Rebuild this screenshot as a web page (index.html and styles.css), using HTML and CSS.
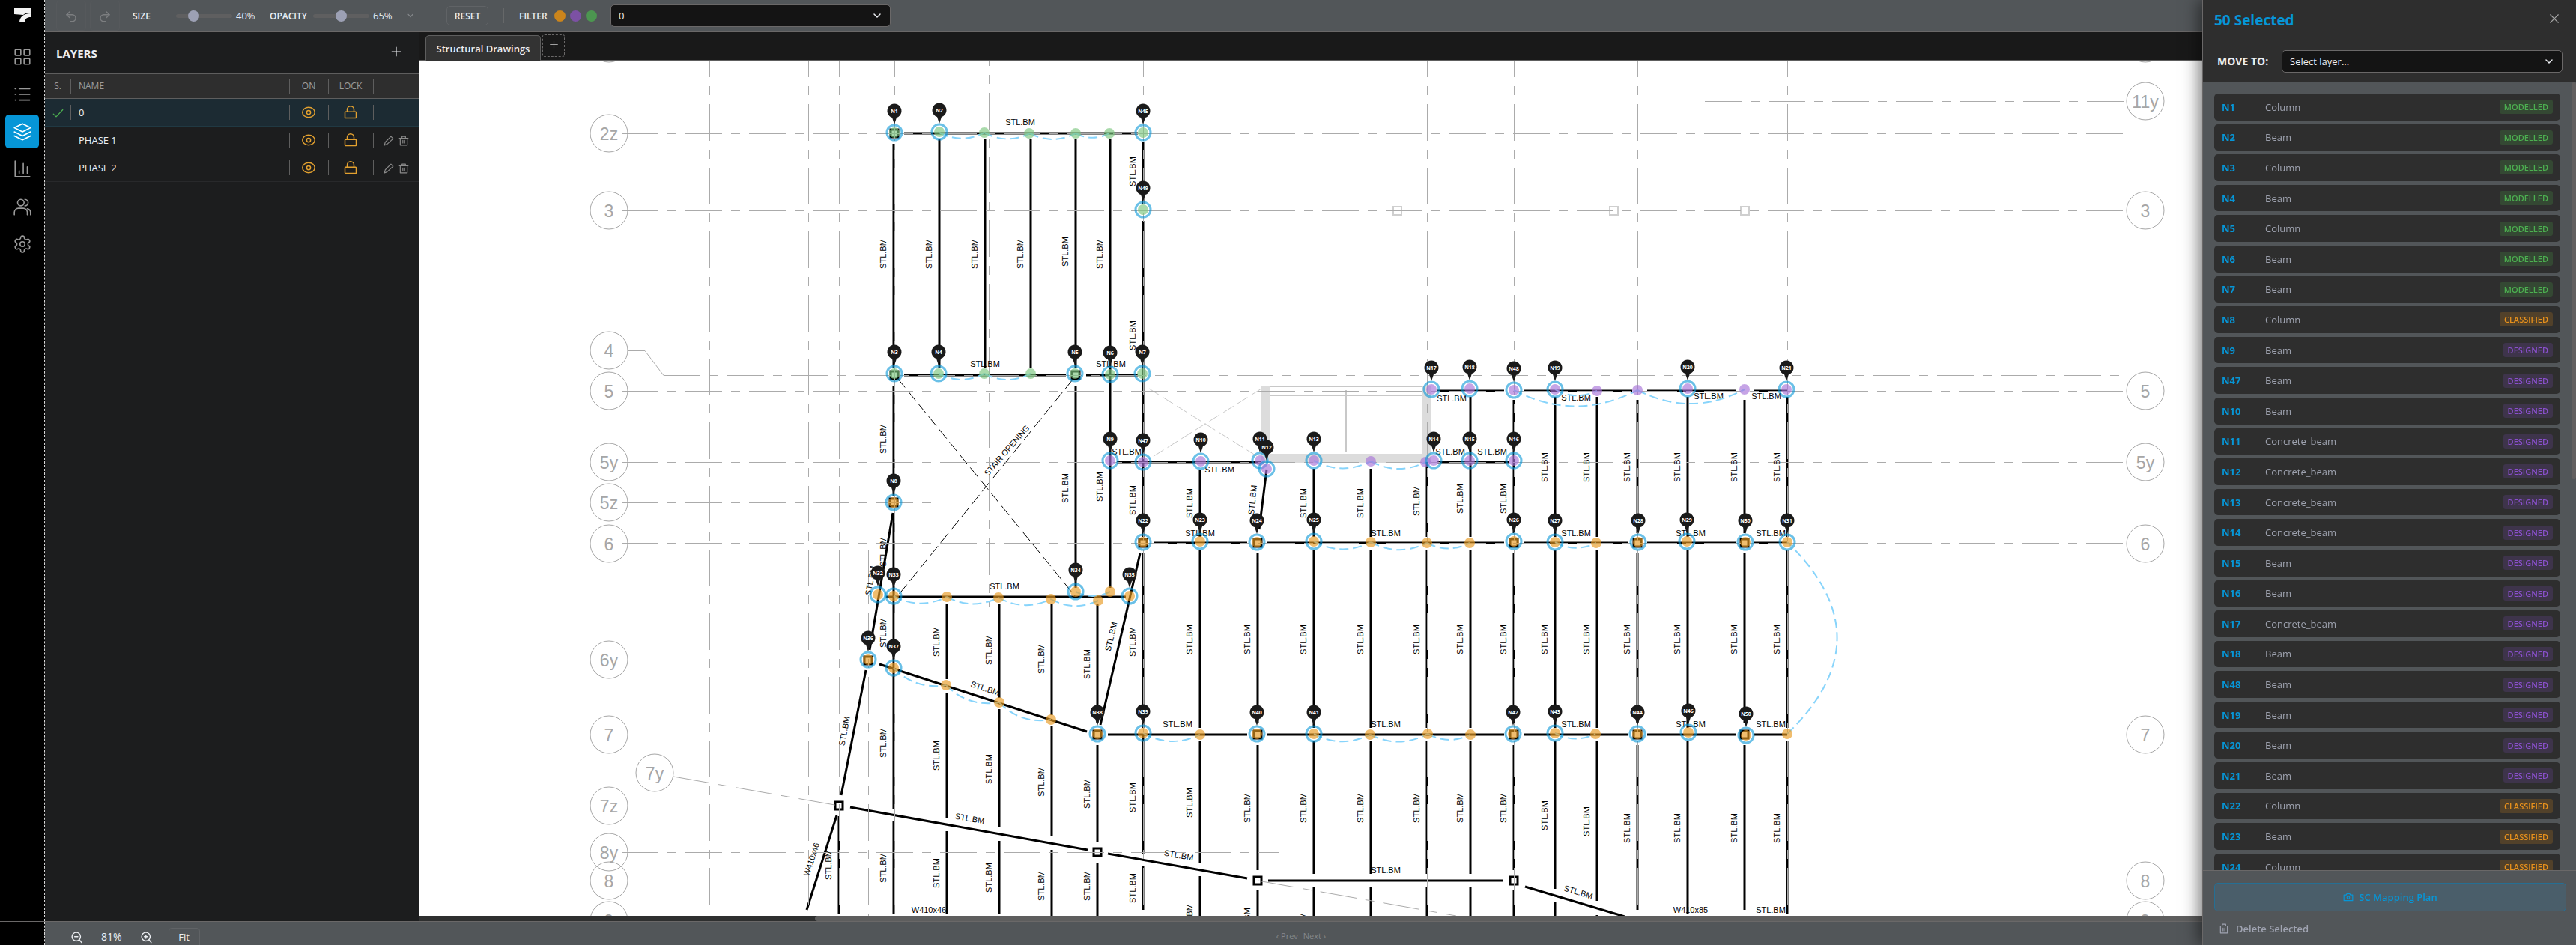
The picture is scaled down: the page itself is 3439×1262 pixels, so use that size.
FILE: index.html
```html
<!DOCTYPE html>
<html lang="en">
<head>
    <meta charset="UTF-8">
    <meta name="viewport" content="width=device-width, initial-scale=1.0">
    <title>Structural Drawings</title>
    <link rel="stylesheet" href="styles.css">
</head>
<body>
    <div class="app">
        <nav class="rail">
            <svg class="logo" viewBox="0 0 22 20"><path d="M0 1h22v6c-5 0-8 1-10 3L0 9z"/><path d="M22 8v5c-5 0-8 2-8 7H7c0-7 5-12 15-12z"/></svg>
            <button class="rail-btn" aria-label="Dashboard"><svg viewBox="0 0 24 24"><rect x="3" y="3" width="7" height="7" rx="1"/><rect x="14" y="3" width="7" height="7" rx="1"/><rect x="3" y="14" width="7" height="7" rx="1"/><rect x="14" y="14" width="7" height="7" rx="1"/></svg></button>
            <button class="rail-btn" aria-label="List"><svg viewBox="0 0 24 24"><path d="M8 5h13M8 12h13M8 19h13M3 5h1M3 12h1M3 19h1"/></svg></button>
            <button class="rail-btn active" aria-label="Layers"><svg viewBox="0 0 24 24"><path d="M12 2 22 7 12 12 2 7zM2 12l10 5 10-5M2 17l10 5 10-5"/></svg></button>
            <button class="rail-btn" aria-label="Reports"><svg viewBox="0 0 24 24"><path d="M3 2v19h18M8 17v-3M13 17V5M18 17v-8"/></svg></button>
            <button class="rail-btn" aria-label="Users"><svg viewBox="0 0 24 24"><circle cx="10" cy="7" r="4"/><path d="M2 22v-3a5 5 0 0 1 5-5h6a5 5 0 0 1 5 5v3M15 3a4 4 0 0 1 0 8M18 14.500a5 5 0 0 1 4 4.500v3"/></svg></button>
            <button class="rail-btn" aria-label="Settings"><svg viewBox="0 0 24 24"><path d="M12.200 2h-.4a2 2 0 0 0-2 2v.2a2 2 0 0 1-1 1.700l-.4.3a2 2 0 0 1-2 0l-.2-.1a2 2 0 0 0-2.700.7l-.2.4a2 2 0 0 0 .7 2.700l.2.1a2 2 0 0 1 1 1.700v.5a2 2 0 0 1-1 1.800l-.2.1a2 2 0 0 0-.7 2.700l.2.4a2 2 0 0 0 2.700.7l.2-.1a2 2 0 0 1 2 0l.4.3a2 2 0 0 1 1 1.700v.2a2 2 0 0 0 2 2h.4a2 2 0 0 0 2-2v-.2a2 2 0 0 1 1-1.700l.4-.3a2 2 0 0 1 2 0l.2.1a2 2 0 0 0 2.700-.7l.2-.4a2 2 0 0 0-.7-2.700l-.2-.1a2 2 0 0 1-1-1.800v-.5a2 2 0 0 1 1-1.700l.2-.1a2 2 0 0 0 .7-2.700l-.2-.4a2 2 0 0 0-2.700-.7l-.2.1a2 2 0 0 1-2 0l-.4-.3a2 2 0 0 1-1-1.700V4a2 2 0 0 0-2-2z"/><circle cx="12" cy="12" r="3"/></svg></button>
        </nav>

        <header class="topbar">
            <button class="history" aria-label="Undo" disabled><svg viewBox="0 0 24 24"><path d="M9 14 4 9l5-5"/><path d="M4 9h10a6 6 0 0 1 0 12h-3"/></svg></button>
            <button class="history" aria-label="Redo" disabled><svg viewBox="0 0 24 24"><path d="m15 14 5-5-5-5"/><path d="M20 9H10a6 6 0 0 0 0 12h3"/></svg></button>
            <label class="bar-label size-label" for="size">SIZE</label>
            <input type="range" id="size" min="10" max="120" value="40">
            <output class="value" for="size">40%</output>
            <label class="bar-label opacity-label" for="opacity">OPACITY</label>
            <input type="range" id="opacity" min="30" max="100" value="65">
            <output class="value" for="opacity">65%</output>
            <button class="more" aria-label="More options"><svg viewBox="0 0 24 24"><path d="m5 8 7 8 7-8"/></svg></button>
            <span class="divider"></span>
            <button class="reset">RESET</button>
            <span class="divider"></span>
            <span class="bar-label filter-label">FILTER</span>
            <button class="dot classified" aria-label="Classified"></button>
            <button class="dot designed" aria-label="Designed"></button>
            <button class="dot modelled" aria-label="Modelled"></button>
            <div class="select top-select">
                <select aria-label="Current layer"><option>0</option><option>PHASE 1</option><option>PHASE 2</option></select>
                <svg viewBox="0 0 24 24"><path d="m4 8 8 8 8-8"/></svg>
            </div>
        </header>

        <aside class="layers">
            <div class="layers-head">
                <h2>LAYERS</h2>
                <button aria-label="Add layer"><svg viewBox="0 0 24 24"><path d="M12 2v20M2 12h20"/></svg></button>
            </div>
            <table>
                <thead>
                    <tr><th class="c-state">S.</th><th class="c-name">NAME</th><th class="c-on">ON</th><th class="c-lock">LOCK</th><th class="c-act"></th></tr>
                </thead>
                <tbody id="layer-rows"></tbody>
            </table>
        </aside>

        <main class="viewer">
            <div class="tabs">
                <button class="tab">Structural Drawings</button>
                <button class="tab-add" aria-label="Add drawing"><svg viewBox="0 0 24 24"><path d="M12 3v18M3 12h18"/></svg></button>
            </div>
            <svg class="plan" id="plan" role="img" aria-label="Structural plan"></svg>
            <div class="hscroll"><div class="hthumb"></div></div>
        </main>

        <footer class="statusbar">
            <div class="rail-end"></div>
            <div class="zoom">
                <button aria-label="Zoom out"><svg viewBox="0 0 24 24"><circle cx="11" cy="11" r="8"/><path d="m21 22-4-5M8 11h6"/></svg></button>
                <span>81%</span>
                <button aria-label="Zoom in"><svg viewBox="0 0 24 24"><circle cx="11" cy="11" r="8"/><path d="m21 22-4-5M8 11h6M11 8v6"/></svg></button>
                <button class="fit">Fit</button>
            </div>
            <div class="pager">
                <button disabled>‹ Prev</button>
                <button disabled>Next ›</button>
            </div>
        </footer>
    </div>

    <section class="drawer">
        <div class="drawer-head">
            <h1>50 Selected</h1>
            <button aria-label="Close"><svg viewBox="0 0 24 24"><path d="M3 3l18 18M21 3 3 21"/></svg></button>
        </div>
        <div class="move">
            <label for="move-to">MOVE TO:</label>
            <div class="select">
                <select id="move-to"><option>Select layer...</option></select>
                <svg viewBox="0 0 24 24"><path d="m4 8 8 8 8-8"/></svg>
            </div>
        </div>
        <div class="list-wrap">
            <ul id="items"></ul>
            <div class="vthumb"></div>
        </div>
        <div class="drawer-foot">
            <button class="mapping"><svg viewBox="0 0 24 24"><path d="M2 7h5l2-3h6l2 3h5v13H2z"/><circle cx="12" cy="13" r="3"/></svg>SC Mapping Plan</button>
            <button class="delete"><svg viewBox="0 0 24 24"><path d="M2 6h20M8 6V2h8v4M4 6v16h16V6M10 11v6M14 11v6"/></svg>Delete Selected</button>
        </div>
    </section>

    <script src="script.js"></script>
</body>
</html>
```
FILE: styles.css
```css
* {
    box-sizing: border-box;
    margin: 0;
    padding: 0;
}
html, body {
    height: 100%;
}
body {
    font-family: "Open Sans", "Noto Sans", sans-serif;
    font-size: 13px;
    color: #eceef2;
    background: #1c1d1e;
    overflow: hidden;
}
button, select {
    font: inherit;
    color: inherit;
    background: none;
    border: 0;
}
svg {
    fill: none;
    stroke: currentColor;
    stroke-linecap: round;
    stroke-linejoin: round;
}
.app {
    height: 100%;
    display: grid;
    grid-template-columns: 60px 500px minmax(0, 1fr);
    grid-template-rows: 43px minmax(0, 1fr) 32px;
}

/* left rail */
.rail {
    grid-row: 1 / 3;
    background: #000;
    border-right: 1px dashed #d8d8d8;
    display: flex;
    flex-direction: column;
    align-items: center;
    gap: 5px;
}
.logo {
    width: 22px;
    height: 20px;
    margin: 10px 0 18px;
    fill: #f2f2f2;
    stroke: none;
}
.rail-btn {
    width: 45px;
    height: 45px;
    border-radius: 5px;
    color: #9a9a9a;
    display: grid;
    place-items: center;
}
.rail-btn svg {
    width: 26px;
    stroke-width: 1.5;
}
.rail-btn.active {
    background: #0696d7;
    color: #fff;
}

/* top bar */
.topbar {
    grid-column: 2 / 4;
    background: #525659;
    border-bottom: 1px solid #6a6868;
    display: flex;
    align-items: center;
    padding-left: 15px;
}
.history {
    width: 40px;
    height: 40px;
    margin-right: 5px;
    border: 1px solid #56595c;
    border-radius: 4px;
    color: #7c7e80;
}
.history svg {
    width: 18px;
    stroke-width: 2;
    vertical-align: middle;
}
.bar-label {
    font-size: 12px;
    font-weight: 600;
}
.size-label {
    width: 58px;
    margin-left: 12px;
}
.opacity-label {
    width: 58px;
    margin-left: 21px;
}
input[type="range"] {
    appearance: none;
    width: 75px;
    height: 16px;
    background: none;
}
input[type="range"]::-webkit-slider-runnable-track {
    height: 5px;
    border-radius: 3px;
    background: #5f5f60;
}
input[type="range"]::-webkit-slider-thumb {
    appearance: none;
    width: 15px;
    height: 15px;
    margin-top: -5px;
    border-radius: 50%;
    background: #9ca0b4;
}
.value {
    width: 24px;
    margin-left: 5px;
}
.more {
    width: 15px;
    margin: 0 20px 0 18px;
    color: #86898c;
}
.more svg {
    width: 10px;
    stroke-width: 3;
}
.divider {
    width: 1px;
    height: 20px;
    background: #666869;
}
.reset {
    width: 56px;
    height: 26px;
    margin: 0 20px;
    border: 1px solid #606366;
    border-radius: 5px;
    font-size: 12px;
    font-weight: 600;
}
.filter-label {
    width: 47px;
    margin-left: 20px;
}
.dot {
    width: 15px;
    height: 15px;
    margin-right: 6px;
    border-radius: 50%;
}
.dot.classified {
    background: #cb851c;
}
.dot.designed {
    background: #7c51a4;
}
.dot.modelled {
    background: #4c9650;
}
.select {
    position: relative;
    flex: 1;
}
.select select {
    appearance: none;
    width: 100%;
    height: 30px;
    padding: 0 10px;
    background: #141414;
    border: 1px solid #6a6868;
    border-radius: 5px;
}
.select svg {
    position: absolute;
    right: 12px;
    top: 9px;
    width: 12px;
    stroke-width: 3;
    pointer-events: none;
}
.top-select {
    flex: none;
    width: 374px;
    margin-left: 12px;
}

/* layers */
.layers {
    background: #1c1d1e;
    border-right: 1px solid #5e5e5e;
}
.layers-head {
    height: 56px;
    padding: 0 23px 0 15px;
    border-bottom: 1px solid #5e5e5e;
    display: flex;
    align-items: center;
    justify-content: space-between;
}
.layers-head h2 {
    font-size: 15px;
    font-weight: 700;
}
.layers-head svg {
    width: 14px;
    stroke-width: 2;
}
.layers table {
    width: 100%;
    border-collapse: collapse;
    table-layout: fixed;
}
.layers th {
    height: 32px;
    font-size: 12px;
    font-weight: 400;
    color: #9b9b9b;
    background-color: #2e2e2e;
    border-bottom: 1px solid #5e5e5e;
}
.layers td {
    height: 37px;
    border-bottom: 1px solid #28292b;
    text-align: center;
}
.layers th, .layers td {
    background-image: linear-gradient(#5e5e5e, #5e5e5e);
    background-repeat: no-repeat;
    background-position: left center;
    background-size: 1px 20px;
}
.layers .c-state, .layers .plain {
    background-image: none;
}
.layers .c-name {
    text-align: left;
    padding-left: 11px;
}
.c-state {
    width: 34px;
}
.c-on {
    width: 52px;
}
.c-lock {
    width: 60px;
}
.c-act {
    width: 61px;
}
.layers tr.current td {
    background-color: #1c2b33;
    border-color: #203943;
}
.layers td svg {
    width: 18px;
    vertical-align: middle;
    color: #e3a12f;
    stroke-width: 2;
}
.layers td.c-state svg {
    width: 15px;
    color: #4caf50;
}
.layers td.c-act svg {
    width: 14px;
    color: #8b8b8b;
    margin: 0 3px;
}

/* drawing */
.viewer {
    display: flex;
    flex-direction: column;
    min-width: 0;
}
.tabs {
    height: 38px;
    padding-left: 8px;
    background: #191919;
    border-bottom: 1px solid #5e5e5e;
    display: flex;
    gap: 2px;
}
.tab {
    width: 154px;
    height: 34px;
    margin-top: 4px;
    border: 1px solid #5e5e5e;
    border-bottom: 0;
    border-radius: 5px 5px 0 0;
    background: #333;
    font-weight: 600;
}
.tab-add {
    width: 30px;
    height: 30px;
    margin-top: 3px;
    border: 1px dashed #6a6868;
    border-radius: 3px;
    color: #a0a0a0;
}
.tab-add svg {
    width: 13px;
    stroke-width: 2;
}
.plan {
    flex: 1;
    width: 100%;
    min-height: 0;
    background: #fff;
    font-family: "Liberation Sans", Arial, sans-serif;
    stroke-linecap: butt;
    stroke-linejoin: miter;
}
.plan text {
    stroke: none;
    fill: #000;
    font-size: 11px;
    text-anchor: middle;
}
.plan .grid {
    stroke: #ababab;
    stroke-dasharray: 49 12 12 12;
}
.plan .solid {
    stroke: #ababab;
}
.plan .bubble {
    stroke: #a6a6a6;
}
.plan text.bubble-text {
    fill: #a6a6a6;
    font-size: 23px;
}
.plan .beam {
    stroke: #000;
    stroke-width: 3;
}
.plan .opening {
    stroke: #000;
    stroke-dasharray: 16 6;
}
.plan .void {
    stroke: #c8c8c8;
    stroke-dasharray: 16 6;
}
.plan .wall {
    fill: #dcdcdc;
    stroke: none;
}
.plan .wall-line {
    stroke: #c8c8c8;
    stroke-width: 2;
}
.plan .post {
    fill: #fff;
    stroke: #000;
    stroke-width: 3;
}
.plan .ghost {
    stroke: #cfcfcf;
    stroke-width: 2;
}
.plan .link {
    stroke: #87d4fb;
    stroke-width: 2;
    stroke-dasharray: 12 6;
}
.plan .node {
    stroke: none;
    opacity: .65;
}
.plan .ring {
    stroke: #0696d7;
    stroke-width: 3;
    opacity: .6;
}
.plan .pin {
    fill: #1a1a1a;
    stroke: none;
}
.plan text.pin-text {
    font-family: "Open Sans", sans-serif;
    font-size: 7px;
    font-weight: 700;
    fill: #fff;
}
.hscroll {
    height: 7px;
    background: #2e2f2f;
}
.hthumb {
    height: 7px;
    margin-left: 528px;
    border-radius: 4px;
    background: #5e5e5e;
}

/* status bar */
.statusbar {
    grid-column: 1 / 4;
    background: #525659;
    border-top: 1px solid #6a6868;
    display: grid;
    grid-template-columns: 60px 1fr auto 1fr;
    align-items: center;
    padding-right: 25px;
}
.rail-end {
    height: 31px;
    background: #000;
    border-right: 1px dashed #d8d8d8;
}
.zoom {
    display: flex;
    align-items: center;
    gap: 24px;
    padding: 8px 0 0 34px;
    font-size: 14px;
}
.zoom svg {
    width: 17px;
    stroke-width: 2;
    vertical-align: middle;
}
.zoom .fit {
    width: 42px;
    height: 34px;
    margin: 0 0 -11px -3px;
    border: 1px solid #606366;
    border-radius: 4px;
    font-size: 13px;
    padding-bottom: 11px;
}
.pager {
    display: flex;
    gap: 7px;
    padding-top: 6px;
}
.pager button {
    font-size: 11px;
    color: #85888b;
}

/* selection drawer, slides over the drawing */
.drawer {
    position: fixed;
    top: 0;
    right: 0;
    bottom: 0;
    width: 499px;
    background: #525659;
    border-left: 1px solid #6a6868;
    box-shadow: -5px 0 20px rgba(0, 0, 0, .5);
    display: flex;
    flex-direction: column;
}
.drawer-head {
    height: 54px;
    padding: 0 22px 0 15px;
    background: #2e2e2e;
    border-bottom: 1px solid #6a6868;
    display: flex;
    align-items: center;
    justify-content: space-between;
}
.drawer-head h1 {
    font-size: 19px;
    color: #0696d7;
}
.drawer-head svg {
    width: 14px;
    color: #a5a5a5;
    stroke-width: 2;
}
.move {
    height: 56px;
    padding: 0 18px 0 19px;
    background: #2e2e2e;
    border-bottom: 1px solid #6a6868;
    display: flex;
    align-items: center;
}
.move label {
    width: 86px;
    font-size: 14px;
    font-weight: 700;
}
.list-wrap {
    flex: 1;
    min-height: 0;
    overflow: hidden;
    display: flex;
    justify-content: space-between;
}
#items {
    list-style: none;
    flex: 1;
    padding: 15px;
    display: flex;
    flex-direction: column;
    gap: 5px;
}
#items li {
    flex: none;
    font-size: 14px;
    min-height: calc(1.4em + 16px);
    padding: 0 10px;
    border-radius: 5px;
    background: #2e2e2e;
    display: flex;
    align-items: center;
}
#items b {
    width: 58px;
    font-size: 13px;
    color: #0696d7;
}
#items span {
    flex: 1;
    font-size: 13px;
    color: #9ca0ad;
}
#items em {
    line-height: 19px;
    padding: 0 6px;
    border-radius: 3px;
    font-size: 11px;
    font-style: normal;
    font-weight: 600;
}
#items .modelled {
    color: #4caf50;
    background: #344833;
}
#items .designed {
    color: #8a50cc;
    background: #3e344b;
}
#items .classified {
    color: #e8911c;
    background: #52412a;
}
.vthumb {
    width: 6px;
    height: 530px;
    border-radius: 3px;
    background: #625f5f;
}
.drawer-foot {
    height: 100px;
    padding: 16px 13px 0 15px;
    border-top: 1px solid #6a6868;
}
.drawer-foot button {
    display: flex;
    align-items: center;
    font-weight: 600;
}
.drawer-foot svg {
    width: 14px;
    stroke-width: 2;
}
.mapping {
    width: 100%;
    height: 38px;
    justify-content: center;
    gap: 7px;
    border: 1px solid #256f94;
    border-radius: 5px;
    background: #4a5e6a;
    color: #0696d7;
}
.delete {
    height: 38px;
    margin-top: 4px;
    padding-left: 6px;
    gap: 9px;
    color: #a0a4b2;
}
```
FILE: script.js
```js
// ---- layers table ----
const eye = '<svg viewBox="0 0 24 24"><ellipse cx="12" cy="12" rx="11" ry="9"/><circle cx="12" cy="12" r="3.500"/></svg>';
const lock = '<svg viewBox="0 0 24 24"><rect x="2" y="11" width="20" height="11" rx="1"/><path d="M6 11V7a6 6 0 0 1 12 0v4"/></svg>';
const pencil = '<svg viewBox="0 0 24 24"><path d="M17 2l5 5L8 20l-6 2 2-7z"/></svg>';
const trash = '<svg viewBox="0 0 24 24"><path d="M2 6h20M8 6V2h8v4M4 6v16h16V6M10 11v6M14 11v6"/></svg>';
const check = '<svg viewBox="0 0 24 24"><path d="m2 13 6 6L22 4"/></svg>';

document.getElementById('layer-rows').innerHTML = ['0', 'PHASE 1', 'PHASE 2'].map((name, i) => `
    <tr class="${i ? '' : 'current'}">
        <td class="c-state">${i ? '' : check}</td>
        <td class="c-name ${i ? 'plain' : ''}">${name}</td>
        <td>${eye}</td>
        <td>${lock}</td>
        <td class="c-act">${i ? pencil + trash : ''}</td>
    </tr>`).join('');

// ---- selected items: m modelled, c classified, d designed ----
const status = { m: 'modelled', c: 'classified', d: 'designed' };
const items = [
    [1, 'Column', 'm'], [2, 'Beam', 'm'], [3, 'Column', 'm'], [4, 'Beam', 'm'], [5, 'Column', 'm'],
    [6, 'Beam', 'm'], [7, 'Beam', 'm'], [8, 'Column', 'c'], [9, 'Beam', 'd'], [47, 'Beam', 'd'],
    [10, 'Beam', 'd'], [11, 'Concrete_beam', 'd'], [12, 'Concrete_beam', 'd'], [13, 'Concrete_beam', 'd'],
    [14, 'Concrete_beam', 'd'], [15, 'Beam', 'd'], [16, 'Beam', 'd'], [17, 'Concrete_beam', 'd'],
    [18, 'Beam', 'd'], [48, 'Beam', 'd'], [19, 'Beam', 'd'], [20, 'Beam', 'd'], [21, 'Beam', 'd'],
    [22, 'Column', 'c'], [23, 'Beam', 'c'], [24, 'Column', 'c']
];
document.getElementById('items').innerHTML = items.map(([n, type, s]) =>
    `<li><b>N${n}</b><span>${type}</span><em class="${status[s]}">${status[s].toUpperCase()}</em></li>`
).join('');

// ---- plan, in sheet coordinates ----
const out = [];
const line = (cls, x1, y1, x2, y2) => out.push(`<path class="${cls}" d="M${x1} ${y1}L${x2} ${y2}"/>`);
const label = (x, y, text = 'STL.BM', angle = 0) =>
    out.push(`<text x="${x}" y="${y}"${angle ? ` transform="rotate(${angle} ${x} ${y})"` : ''}>${text}</text>`);

// walls around the core
out.push('<path class="wall" d="M1684 515h12v91h203v-91h12v103h-227z"/>');
out.push('<path class="wall-line" d="M1696 516h203M1696 528h203M1797 521v82"/>');
line('void', 1534, 519, 1684, 613);
line('void', 1684, 519, 1534, 613);
[1865, 2154, 2329].forEach(x => out.push(`<rect class="ghost" x="${x - 5}" y="276" width="11" height="11"/>`));

// vertical beams: x, then start/end pairs
[
    [1193, 192, 492, 515, 662, 685, 1080, 1097, 1220],
    [1254, 186, 492], [1315, 186, 492], [1376, 186, 492],
    [1436, 186, 492, 515, 785], [1482, 186, 785],
    [1526, 189, 272, 295, 717, 739, 972, 982, 1140, 1157, 1215],
    [1120, 1090, 1220],
    [1264, 806, 907, 925, 1092, 1110, 1220],
    [1334, 806, 932, 947, 1105, 1123, 1220],
    [1404, 806, 955, 970, 1117, 1135, 1223],
    [1465, 806, 965, 995, 1125, 1152, 1223],
    [1602, 627, 717, 735, 972, 990, 1153, 1170, 1223],
    [1679, 739, 965, 995, 1162, 1189, 1223],
    [1754, 626, 717, 735, 972, 990, 1167, 1184, 1223],
    [1830, 626, 717, 735, 972, 990, 1167, 1184, 1223],
    [1905, 617, 717, 735, 972, 990, 1167, 1184, 1223],
    [1963, 530, 717, 735, 972, 990, 1167, 1184, 1223],
    [2021, 534, 712, 739, 965, 995, 1162, 1189, 1223],
    [2076, 530, 717, 735, 972, 990, 1187, 1205, 1223],
    [2132, 530, 717, 735, 972, 990, 1203, 1222, 1223],
    [2186, 534, 712, 739, 965, 995, 1215],
    [2253, 530, 717, 735, 972, 990, 1220],
    [2329, 534, 712, 739, 965, 995, 1215],
    [2386, 530, 717, 735, 972, 990, 1220]
].forEach(([x, ...ys]) => {
    for (let i = 0; i < ys.length; i += 2) line('beam', x, ys[i], x, ys[i + 1]);
});

// horizontal beams
[
    [178, 1207, 1519], [501, 1207, 1423, 1450, 1519], [797, 1183, 1503],
    [617, 1491, 1683, 1919, 2014],
    [522, 1919, 2008, 2034, 2179, 2199, 2317, 2341, 2386],
    [725, 1540, 1665, 1692, 2008, 2034, 2174, 2199, 2317, 2341, 2386],
    [981, 1479, 1665, 1692, 2008, 2034, 2174, 2199, 2317, 2341, 2386],
    [1176, 1693, 2007]
].forEach(([y, ...xs]) => {
    for (let i = 0; i < xs.length; i += 2) line('beam', xs[i], y, xs[i + 1], y);
});

// sloped beams
[
    [1192, 685, 1161, 868], [1156, 895, 1123, 1062], [1117, 1089, 1077, 1215],
    [1174, 887, 1451, 977], [1522, 739, 1469, 968], [1135, 1078, 1452, 1135],
    [1479, 1140, 1665, 1173], [2036, 1184, 2169, 1224], [1691, 627, 1681, 707]
].forEach(b => line('beam', ...b));

// stair opening
line('opening', 1198, 505, 1436, 797);
line('opening', 1432, 507, 1199, 795);

// steel columns
[[1120, 1076], [1465, 1138], [1679, 1176], [2021, 1176],
 [1194, 178], [1194, 501], [1436, 501], [1193, 671], [1159, 882], [1465, 981],
 [1526, 725], [1679, 725], [2021, 725], [2186, 725], [2329, 725],
 [1679, 981], [2021, 981], [2186, 981], [2329, 981]
].forEach(([x, y]) => out.push(`<rect class="post" x="${x - 5}" y="${y - 5}" width="10" height="10"/>`));

// grid lines
[947, 1022, 1079, 1120, 1194, 1404, 1526, 1679, 1866, 1905, 2021, 2157, 2186, 2329, 2386, 2516]
    .forEach(x => line('grid', x + .5, 54, x + .5, 1214));
line('grid', 1159.5, 734, 1159.5, 1223);
line('grid', 1320.5, 39, 1320.5, 810);
[[178, 2838], [281, 2838], [522, 2838], [617, 2838], [671, 1250], [725, 2838], [881, 1212],
 [981, 2838], [1076, 1708], [1138, 1708], [1176, 2838]
].forEach(([y, end]) => line('grid', 830, y + .5, end, y + .5));
line('grid', 2276, 135.5, 2838, 135.5);
line('grid', 886, 501.5, 2838, 501.5);
out.push('<path class="solid" d="M838 468.500h23l25 33"/>');
line('grid', 899, 1037, 1120, 1076);
line('grid', 1679, 1176, 1944, 1223);

// grid bubbles
[[813, 58, ''], [813, 178, '2z'], [813, 281, '3'], [813, 468, '4'], [813, 522, '5'], [813, 617, '5y'],
 [813, 671, '5z'], [813, 726, '6'], [813, 881, '6y'], [813, 981, '7'], [874, 1032, '7y'],
 [813, 1076, '7z'], [813, 1138, '8y'], [813, 1176, '8'], [813, 1229, '9'],
 [2864, 58, ''], [2864, 135, '11y'], [2864, 281, '3'], [2864, 522, '5'], [2864, 617, '5y'],
 [2864, 726, '6'], [2864, 981, '7'], [2864, 1176, '8'], [2864, 1229, '9']
].forEach(([x, y, text]) => {
    out.push(`<circle class="bubble" cx="${x}" cy="${y}" r="25"/>`);
    if (text) out.push(`<text class="bubble-text" x="${x}" y="${y + 9}">${text}</text>`);
});

// beam marks along vertical beams: x of the beam, then centres
[
    [1193, 339, 586, 737, 845, 992, 1159], [1254, 339], [1315, 339], [1376, 339],
    [1436, 336, 652], [1482, 339, 650], [1526, 229, 448, 668, 857, 1065, 1186], [1120, 1155],
    [1264, 857, 1009, 1166], [1334, 868, 1027, 1172], [1404, 880, 1044, 1183], [1465, 887, 1060, 1183],
    [1602, 672, 854, 1072, 1227], [1679, 854, 1079, 1232], [1754, 672, 854, 1079, 1239],
    [1830, 672, 854, 1079], [1905, 669, 854, 1079], [1963, 666, 854, 1079], [2021, 666, 854, 1079],
    [2076, 624, 854, 1089], [2132, 624, 854, 1097], [2186, 624, 854, 1106], [2253, 624, 854, 1106],
    [2329, 624, 854, 1106], [2386, 624, 854, 1106]
].forEach(([x, ...ys]) => ys.forEach(y => label(x - 10, y, 'STL.BM', -90)));

[[1362, 167], [1315, 490], [1483, 490], [1504, 607], [1341, 787], [1572, 971], [1938, 536], [2104, 535],
 [2281, 533], [2358, 533], [1628, 631], [1936, 607], [1992, 607], [1602, 716], [1850, 716], [2104, 716],
 [2257, 716], [2364, 716], [1850, 971], [2104, 971], [2257, 971], [2364, 971], [1850, 1166], [2364, 1219]
].forEach(([x, y]) => label(x, y));
label(1240, 1219, 'W410x46');
label(2257, 1219, 'W410x85');
label(1314, 923, 'STL.BM', 18);
label(1347, 604, 'STAIR OPENING', -49);
label(1166, 776, 'STL.BM', -80);
label(1131, 977, 'STL.BM', -79);
label(1487, 851, 'STL.BM', -77);
label(1676, 668, 'STL.BM', -84);
label(1087, 1149, 'W410x46', -72);
label(1294, 1097, 'STL.BM', 10);
label(1573, 1146, 'STL.BM', 10);
label(2106, 1195, 'STL.BM', 17);

// span links between neighbouring nodes
const link = (x1, y1, x2, y2, bend = .24) => {
    const cx = (x1 + x2) / 2 - (y2 - y1) * bend;
    const cy = (y1 + y2) / 2 + (x2 - x1) * bend;
    out.push(`<path class="link" d="M${x1} ${y1}Q${cx} ${cy} ${x2} ${y2}"/>`);
};
[
    [1254, 177, 1314, 177, 1375, 178, 1436, 178, 1481, 178],
    [1253, 499, 1314, 499, 1376, 499],
    [1193, 796, 1264, 797, 1333, 798, 1403, 800, 1466, 802],
    [1436, 790, 1482, 790],
    [1193, 892, 1263, 915, 1334, 938, 1403, 961],
    [1754, 615, 1830, 616, 1903, 617],
    [2021, 521, 2186, 521, 2329, 520], [2076, 520, 2132, 522],
    [1754, 723, 1830, 724, 1905, 725, 1962, 725], [2076, 724, 2131, 725],
    [1526, 979, 1602, 981], [1754, 980, 1829, 981, 1906, 980, 1963, 981], [2076, 979, 2130, 980]
].forEach(p => {
    // the bend leaves the arc just clear of the beam it runs beside
    for (let i = 0; i + 3 < p.length; i += 2) link(p[i], p[i + 1], p[i + 2], p[i + 3], .26);
});
link(2386, 980, 2386, 724, .52);

// nodes: x, y, pin number (0 = plain node)
const nodes = {
    '#7bc67e': [[1194, 177, 1], [1254, 176, 2], [1314, 177, 0], [1374, 178, 0], [1436, 178, 0], [1481, 178, 0],
        [1526, 177, 45], [1526, 280, 49], [1194, 499, 3], [1253, 499, 4], [1314, 499, 0], [1376, 499, 0],
        [1435, 499, 5], [1482, 500, 6], [1525, 499, 7]],
    '#a873d8': [[1482, 615, 9], [1526, 617, 47], [1603, 616, 10], [1682, 615, 11], [1691, 626, 12], [1754, 615, 13],
        [1830, 616, 0], [1903, 617, 0], [1914, 615, 14], [1962, 615, 15], [2021, 615, 16], [1911, 520, 17],
        [1962, 519, 18], [2021, 521, 48], [2076, 520, 19], [2132, 522, 0], [2186, 521, 0], [2253, 519, 20],
        [2329, 520, 0], [2385, 520, 21]],
    '#e89a21': [[1193, 671, 8], [1172, 794, 32], [1193, 796, 33], [1436, 790, 34], [1508, 796, 35],
        [1264, 797, 0], [1333, 798, 0], [1403, 800, 0], [1466, 802, 0], [1482, 790, 0], [1159, 881, 36],
        [1193, 892, 37], [1263, 915, 0], [1334, 938, 0], [1403, 961, 0], [1465, 980, 38], [1526, 979, 39],
        [1526, 724, 22], [1602, 723, 23], [1678, 724, 24], [1754, 723, 25], [1830, 724, 0], [1905, 725, 0],
        [1962, 725, 0], [2021, 723, 26], [2076, 724, 27], [2131, 725, 0], [2187, 724, 28], [2252, 723, 29],
        [2330, 724, 30], [2386, 724, 31], [1602, 981, 0], [1678, 980, 40], [1754, 980, 41], [1829, 981, 0],
        [1906, 980, 0], [1963, 981, 0], [2020, 980, 42], [2076, 979, 43], [2130, 980, 0], [2186, 980, 44],
        [2254, 978, 46], [2331, 982, 50], [2386, 980, 0]]
};
for (const color in nodes) {
    nodes[color].forEach(([x, y, n]) => {
        out.push(`<circle class="node" cx="${x}" cy="${y}" r="7" fill="${color}"/>`);
        if (!n) return;
        out.push(`<circle class="ring" cx="${x}" cy="${y}" r="10"/>`);
        out.push(`<path class="pin" d="M${x} ${y - 11}l-3 -9a9.500 9.500 0 1 1 6 0z"/>`);
        out.push(`<text class="pin-text" x="${x}" y="${y - 26}">N${n}</text>`);
    });
}

document.getElementById('plan').innerHTML = `<g transform="translate(-560 -81)">${out.join('')}</g>`;
```
